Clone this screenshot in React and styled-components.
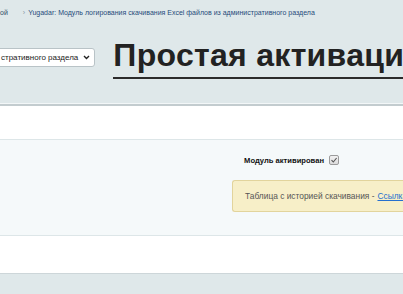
import React from "react";
import styled, { createGlobalStyle } from "styled-components";

const GlobalStyle = createGlobalStyle`
  html, body {
    margin: 0;
    padding: 0;
    background: #dfe8ea;
    font-family: "Liberation Sans", Arial, sans-serif;
    overflow: hidden;
  }
`;

const Page = styled.div`
  width: 403px;
  height: 294px;
  overflow: hidden;
  background: #dfe8ea;
`;

const Header = styled.div`
  height: 104px;
  box-sizing: border-box;
  padding-top: 8px;
`;

const Breadcrumbs = styled.div`
  display: flex;
  align-items: center;
  font-size: 7px;
  line-height: 9px;
  color: #2d4a66;
  white-space: nowrap;
`;

const Crumb = styled.span`
  color: ${({ current }) => (current ? "#1f4b7a" : "#2d4a66")};
`;

const Sep = styled.span`
  color: #8a9aa6;
  font-size: 7px;
  margin: 0 3px 0 15px;
`;

const TitleRow = styled.div`
  display: flex;
  align-items: flex-start;
  margin-top: 20px;
  white-space: nowrap;
`;

const SelectBox = styled.div`
  display: flex;
  align-items: center;
  gap: 5px;
  height: 19px;
  box-sizing: border-box;
  margin-left: -10px;
  margin-top: 11px;
  padding: 0 4px 0 10px;
  background: #fff;
  border: 1px solid #b9c3c7;
  border-radius: 3px;
  font-size: 8px;
  color: #222;
  flex-shrink: 0;
`;

const Title = styled.h1`
  margin: 0 0 0 18px;
  padding: 0 0 4px;
  font-size: 32px;
  line-height: 36px;
  letter-spacing: 0.3px;
  font-weight: bold;
  color: #222;
  border-bottom: 2px solid #2b2b2b;
  flex-shrink: 0;
`;

const Content = styled.div`
  background: #fff;
  border-top: 2px solid #c3cccf;
  box-shadow: 0 -1px 0 #f3f7f8;
  border-bottom: 1px solid #cdd6d9;
`;

const TabsSpace = styled.div`
  height: 33px;
`;

const Panel = styled.div`
  background: #f5f9fa;
  border-top: 1px solid #dde6e8;
  border-bottom: 1px solid #dde6e8;
  height: 97px;
  box-sizing: border-box;
  padding-top: 15px;
`;

const FieldRow = styled.div`
  display: grid;
  grid-template-columns: 324px auto;
  align-items: center;
  column-gap: 5px;
`;

const Label = styled.label`
  text-align: right;
  font-size: 7.6px;
  font-weight: bold;
  color: #111;
`;

const Check = styled.span`
  display: inline-flex;
  align-items: center;
  justify-content: center;
  width: 10px;
  height: 10px;
  box-sizing: border-box;
  border: 1px solid #9b9b9b;
  border-radius: 2px;
  background: linear-gradient(#f2f2f2, #dcdcdc);
`;

const Notice = styled.div`
  margin: 15px 0 0 232px;
  height: 32px;
  box-sizing: border-box;
  display: flex;
  align-items: center;
  padding-left: 12px;
  background: #f7efc8;
  border: 1px solid #e2d49c;
  border-right: none;
  border-radius: 3px 0 0 3px;
  font-size: 8.4px;
  color: #555;
  white-space: nowrap;
`;

const Link = styled.a`
  color: #2670cf;
  text-decoration: underline;
  margin-left: 3px;
`;

const BottomSpace = styled.div`
  height: 37px;
`;

const App = () => (
  <Page>
    <GlobalStyle />
    <Header>
      <Breadcrumbs>
        <Crumb>ой</Crumb>
        <Sep>›</Sep>
        <Crumb current>
          Yugadar: Модуль логирования скачивания Excel файлов из административного раздела
        </Crumb>
      </Breadcrumbs>
      <TitleRow>
        <SelectBox>
          <span>стративного раздела</span>
          <svg width="7" height="5" viewBox="0 0 7 5">
            <path d="M1 1l2.5 2.5L6 1" fill="none" stroke="#222" strokeWidth="1.4" />
          </svg>
        </SelectBox>
        <Title>Простая активация модуля</Title>
      </TitleRow>
    </Header>
    <Content>
      <TabsSpace />
      <Panel>
        <FieldRow>
          <Label>Модуль активирован</Label>
          <Check>
            <svg width="8" height="8" viewBox="0 0 8 8">
              <path d="M1.5 4.2l1.8 1.8L6.6 2" fill="none" stroke="#555" strokeWidth="1.1" />
            </svg>
          </Check>
        </FieldRow>
        <Notice>
          Таблица с историей скачивания -<Link href="#">Ссылка</Link>
        </Notice>
      </Panel>
      <BottomSpace />
    </Content>
  </Page>
);

export default App;
